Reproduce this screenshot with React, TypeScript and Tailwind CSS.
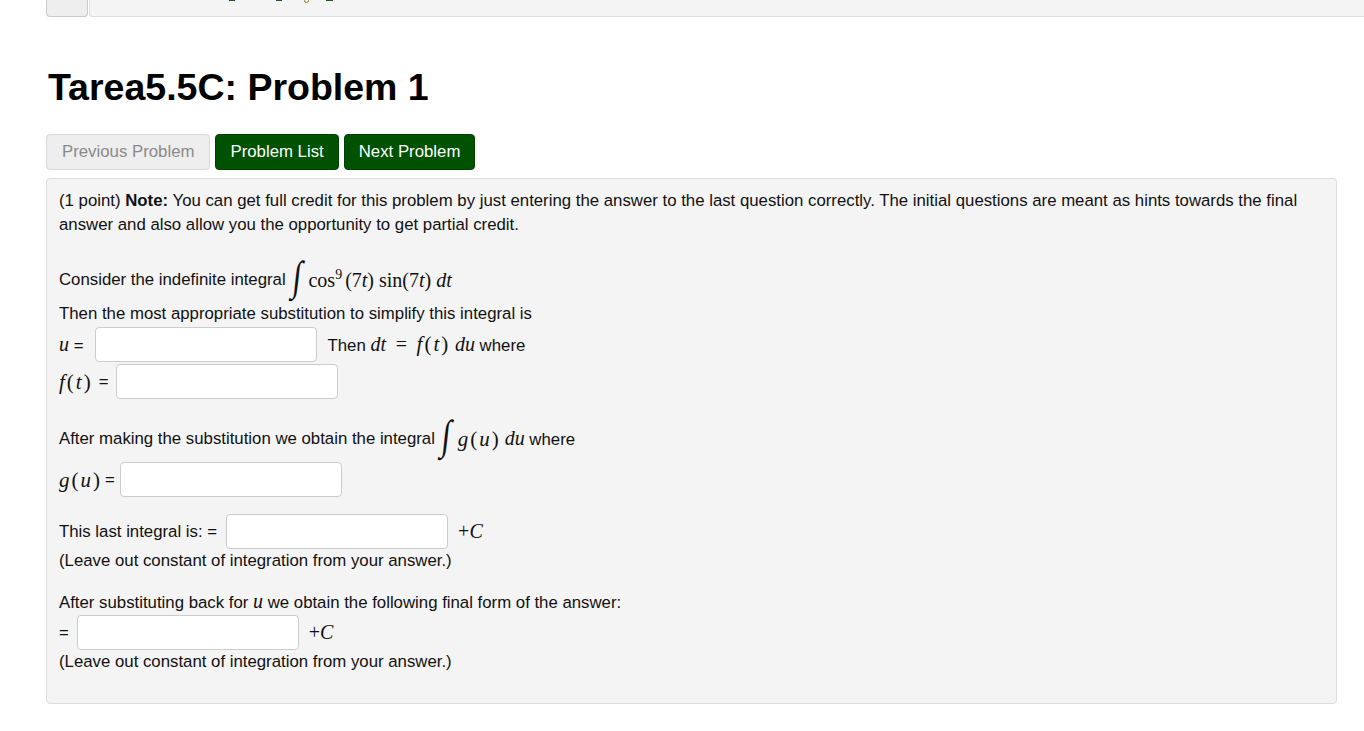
import React from "react";

const sans = "font-['Liberation_Sans',Arial,sans-serif]";
const serif = "font-['Liberation_Serif','DejaVu_Serif',serif]";

function M({ children }: { children: React.ReactNode }) {
  return <span className={`${serif} italic text-[20px]`}>{children}</span>;
}

function R({ children }: { children: React.ReactNode }) {
  return <span className={`${serif} text-[20px]`}>{children}</span>;
}

// f(t), g(u) style function labels, spaced out like MathJax
function Fn({ f, v }: { f: string; v: string }) {
  return (
    <span className={`${serif} text-[21px] tracking-[2px]`}>
      <i>{f}</i>(<i>{v}</i>)
    </span>
  );
}

function Integral() {
  return (
    <span
      className={`${serif} italic inline-block text-[32px] leading-none mx-[7px] -translate-y-[4px] scale-y-[1.3] skew-x-[-8deg]`}
    >
      ∫
    </span>
  );
}

function AnswerInput() {
  return (
    <input
      type="text"
      className="w-[222px] h-[35px] rounded-[4px] border border-[#cccccc] bg-white px-2 outline-none"
    />
  );
}

function Button({ label, disabled }: { label: string; disabled?: boolean }) {
  if (disabled) {
    return (
      <button className="h-[36px] rounded-[4px] border border-[#d9d9d9] bg-[#eeeeee] px-[15px] text-[#8a8a8a]">
        {label}
      </button>
    );
  }
  return (
    <button className="h-[36px] rounded-[4px] border border-[#004000] bg-[#005100] px-[14px] text-white">
      {label}
    </button>
  );
}

export default function App() {
  return (
    <div className={`${sans} min-h-[731px] bg-white text-[16.8px] text-[#111]`}>
      {/* cut-off header bar */}
      <div className="flex h-[17px] items-start">
        <div className="ml-[46px] h-[17px] w-[42px] rounded-b-[4px] border border-t-0 border-[#c9c9c9] bg-[#eeeeee]" />
        <div className="relative ml-[1px] h-[17px] flex-1 rounded-bl-[4px] border-b border-l border-[#dddddd] bg-[#f4f4f4]">
          <span className="absolute left-[139px] top-0 h-[1px] w-[6px] bg-[#1f5a1f]" />
          <span className="absolute left-[186px] top-0 h-[1px] w-[6px] bg-[#1f5a1f]" />
          <span className="absolute left-[214px] top-[-2px] h-[5px] w-[5px] rounded-full border border-[#8a7a20]" />
          <span className="absolute left-[236px] top-0 h-[1px] w-[7px] bg-[#1f5a1f]" />
        </div>
      </div>

      <div className="ml-[46px] w-[1291px]">
        <h1 className="mt-[48px] pl-[2px] text-[37.5px] font-bold leading-[44px] text-black">
          Tarea5.5C: Problem 1
        </h1>

        <div className="mt-[25px] flex gap-[5px]">
          <Button label="Previous Problem" disabled />
          <Button label="Problem List" />
          <Button label="Next Problem" />
        </div>

        <div className="mt-[8px] h-[526px] rounded-[4px] border border-[#dddddd] bg-[#f4f4f4] px-[12px] pt-[10px] leading-[24px]">
          <p>
            (1 point) <b>Note:</b> You can get full credit for this problem by just entering the answer to
            the last question correctly. The initial questions are meant as hints towards the final answer
            and also allow you the opportunity to get partial credit.
          </p>

          <div className="mt-[22px] flex h-[42px] items-center">
            <span>Consider the indefinite integral</span>
            <Integral />
            <R>
              cos<sup className="text-[14px] relative top-[-8px]">9</sup>
              <span className="ml-[3px]">(7</span>
              <M>t</M>)<span className="ml-[5px]">sin(7</span>
              <M>t</M>)<span className="ml-[5px]" />
              <M>dt</M>
            </R>
          </div>

          <div className="mt-[1px]">Then the most appropriate substitution to simplify this integral is</div>

          <div className="mt-[1px] flex items-center">
            <span className="mr-[12px]">
              <M>u</M> =
            </span>
            <AnswerInput />
            <span className="ml-[10px]">
              Then <M>dt</M> <R>&nbsp;=&nbsp;</R> <Fn f="f" v="t" /> <M>du</M> where
            </span>
          </div>

          <div className="mt-[2px] flex items-center">
            <span className="mr-[7px] flex items-center">
              <Fn f="f" v="t" />
              <span className="ml-[6px]">=</span>
            </span>
            <AnswerInput />
          </div>

          <div className="mt-[19px] flex h-[42px] items-center">
            <span>After making the substitution we obtain the integral</span>
            <Integral />
            <Fn f="g" v="u" />
            <span className="ml-[4px]">
              <M>du</M> where
            </span>
          </div>

          <div className="mt-[2px] flex items-center">
            <span className="mr-[5px] flex items-center">
              <Fn f="g" v="u" />
              <span className="ml-[3px]">=</span>
            </span>
            <AnswerInput />
          </div>

          <div className="mt-[17px] flex items-center">
            <span className="mr-[9px]">This last integral is: =</span>
            <AnswerInput />
            <span className="ml-[10px]">
              <R>+</R>
              <M>C</M>
            </span>
          </div>
          <div>(Leave out constant of integration from your answer.)</div>

          <div className="mt-[16px]">
            After substituting back for <M>u</M> we obtain the following final form of the answer:
          </div>
          <div className="flex items-center">
            <span className="mr-[8px]">=</span>
            <AnswerInput />
            <span className="ml-[10px]">
              <R>+</R>
              <M>C</M>
            </span>
          </div>
          <div>(Leave out constant of integration from your answer.)</div>
        </div>
      </div>
    </div>
  );
}
